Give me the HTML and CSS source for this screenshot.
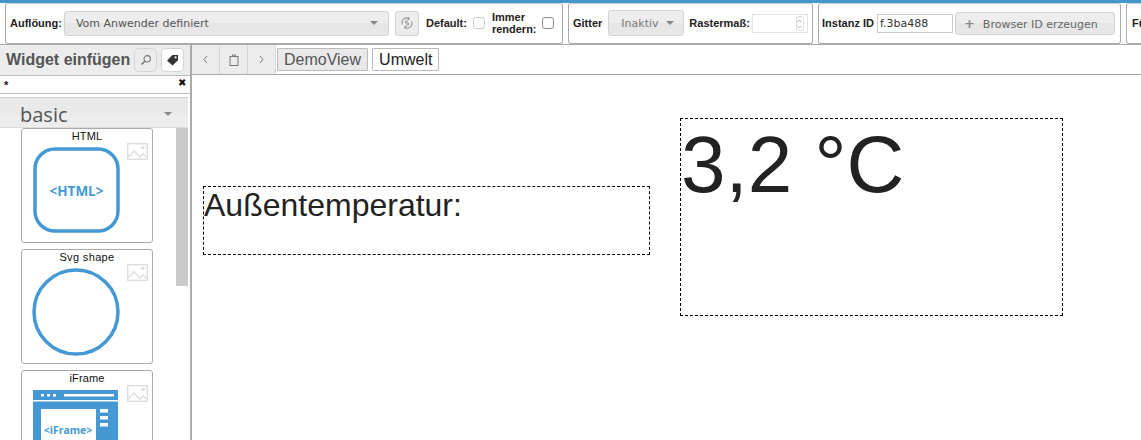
FILE: index.html
```html
<!DOCTYPE html>
<html lang="de">
<head>
<meta charset="utf-8">
<title>Editor</title>
<link rel="stylesheet" href="styles.css">
</head>
<body>
<div class="toolbar">
  <div class="group g1">
    <span class="lbl">Auflöung:</span>
    <div class="select res"><span>Vom Anwender definiert</span><i class="caret"></i></div>
    <button class="iconbtn"><svg width="14" height="14" viewBox="0 0 14 14" fill="none" stroke="#999" stroke-width="1.1"><path d="M2.5 8.5A4.6 4.6 0 0 1 9 2.6M11.5 5.5A4.6 4.6 0 0 1 5 11.4"/><path d="M8 1l1.4 1.8L7.6 4M6 13l-1.4-1.8L6.4 10"/><path d="M7.8 5H6.4a1 1 0 0 0 0 2h1.2a1 1 0 0 1 0 2H6.2"/></svg></button>
    <span class="lbl def">Default:</span><span class="check"></span>
    <span class="lbl two">Immer<br>rendern:</span><span class="check dark"></span>
  </div>
  <div class="group g2">
    <span class="lbl">Gitter</span>
    <div class="select grid"><span>Inaktiv</span><i class="caret"></i></div>
    <span class="lbl">Rastermaß:</span>
    <div class="spin"><span class="spinner"><svg width="7" height="14" viewBox="0 0 7 14" fill="none" stroke="#aaa"><path d="M1.5 5L3.5 3l2 2M1.5 9l2 2 2-2"/></svg></span></div>
  </div>
  <div class="group g3">
    <span class="lbl">Instanz ID</span>
    <div class="idinput">f.3ba488</div>
    <button class="browser"><b>+</b>Browser ID erzeugen</button>
  </div>
  <div class="group g4"><span class="lbl">Fü</span></div>
</div>
<div class="main">
  <aside class="side">
    <div class="sidehead">
      <h2>Widget einfügen</h2>
      <span class="tool"><svg width="12" height="12" viewBox="0 0 12 12" fill="none" stroke="#777" stroke-width="1.1"><circle cx="7.2" cy="4.8" r="3.2"/><path d="M4.8 7.2L1.5 10.5" stroke-width="1.6"/></svg></span>
      <span class="tool on"><svg width="13" height="12" viewBox="0 0 13 12"><path d="M1 6.5L6.5 1H12v5.2L6.5 11.5z" fill="#333"/><circle cx="9.6" cy="3.4" r="1.1" fill="#fff"/></svg></span>
    </div>
    <div class="search"><span class="q">*</span><span class="x">✖</span></div>
    <div class="accordion"><span>basic</span><i class="caret"></i></div>
    <div class="list">
      <div class="cards">
        <div class="card">
          <div class="name">HTML</div>
          <svg class="ph" width="21" height="17" viewBox="0 0 21 17" fill="none" stroke="#ddd" stroke-width="1.4"><rect x=".7" y=".7" width="19.6" height="15.6"/><path d="M1 14l6-6 6 6 3-3 4 3.500"/><circle cx="16" cy="4.500" r="1.100" fill="#ddd"/></svg>
          <div class="thumb"><svg width="88" height="86" viewBox="0 0 88 86"><rect x="2" y="2" width="83" height="82" rx="20" fill="#fff" stroke="#4499d4" stroke-width="3.500"/><text x="43.500" y="49" class="svgt t1" text-anchor="middle">&lt;HTML&gt;</text></svg></div>
        </div>
        <div class="card">
          <div class="name wide">Svg shape</div>
          <svg class="ph" width="21" height="17" viewBox="0 0 21 17" fill="none" stroke="#ddd" stroke-width="1.4"><rect x=".7" y=".7" width="19.6" height="15.6"/><path d="M1 14l6-6 6 6 3-3 4 3.500"/><circle cx="16" cy="4.500" r="1.100" fill="#ddd"/></svg>
          <div class="thumb"><svg width="90" height="90" viewBox="0 0 90 90"><circle cx="44" cy="44" r="42" fill="#fff" stroke="#4499d4" stroke-width="3.500"/></svg></div>
        </div>
        <div class="card">
          <div class="name">iFrame</div>
          <svg class="ph" width="21" height="17" viewBox="0 0 21 17" fill="none" stroke="#ddd" stroke-width="1.4"><rect x=".7" y=".7" width="19.6" height="15.6"/><path d="M1 14l6-6 6 6 3-3 4 3.500"/><circle cx="16" cy="4.500" r="1.100" fill="#ddd"/></svg>
          <div class="thumb"><svg width="86" height="86" viewBox="0 0 86 86"><rect width="85" height="86" fill="#4499d4"/><g fill="#fff"><rect y="10" width="85" height="1.500"/><rect x="8" y="4" width="3" height="2.500"/><rect x="14" y="4" width="3" height="2.500"/><rect x="20" y="4" width="3" height="2.500"/><rect x="31" y="4" width="50" height="2.500"/><rect x="8" y="19" width="55" height="67"/><rect x="67" y="19" width="8" height="3.500"/><rect x="67" y="26" width="8" height="3.500"/><rect x="67" y="33" width="8" height="3.500"/></g><text x="35" y="44" class="svgt t2" text-anchor="middle">&lt;iFrame&gt;</text></svg></div>
        </div>
      </div>
      <div class="scrollbar"></div>
    </div>
  </aside>
  <section class="work">
    <div class="tabs">
      <button class="nav"><svg width="7" height="9" viewBox="0 0 7 9" fill="none" stroke="#777"><path d="M5 1L2 4.500 5 8"/></svg></button>
      <button class="nav"><svg width="10" height="12" viewBox="0 0 10 12" fill="none" stroke="#777"><rect x="1" y="2.500" width="8" height="9"/><path d="M3.500 2.500V1h3v1.500"/></svg></button>
      <button class="nav"><svg width="7" height="9" viewBox="0 0 7 9" fill="none" stroke="#777"><path d="M2 1l3 3.500L2 8"/></svg></button>
      <span class="tab">DemoView</span>
      <span class="tab active">Umwelt</span>
    </div>
    <div class="canvas">
      <div class="widget w1">Außentemperatur:</div>
      <div class="widget w2">3,2 °C</div>
    </div>
  </section>
</div>
</body>
</html>
```
FILE: styles.css
```css
* { box-sizing: border-box; }
html, body { margin: 0; height: 100%; overflow: hidden; }
body {
  width: 1141px; height: 440px; background: #fff;
  font-family: "Liberation Sans", Arial, sans-serif; color: #222;
  border-top: 3px solid #4596cf;
}
.toolbar {
  height: 42px; display: flex; gap: 5px; padding: 0 0 0 5px;
  border-bottom: 1px solid #aaa; overflow: hidden; background: #fff;
}
.group {
  height: 41px; padding-bottom: 1px; border: 1px solid #aaa; border-top-color: #ccc; border-radius: 3px;
  display: flex; align-items: center; flex: none; background: #fff;
}
.g1 { width: 558px; padding-left: 4px; }
.g2 { width: 245px; padding-left: 4px; }
.g3 { width: 303px; padding-left: 3px; }
.g4 { width: 40px; padding-left: 5px; }
.lbl { font-size: 11px; font-weight: bold; color: #222; line-height: 12px; }
.select {
  display: flex; align-items: center; justify-content: space-between;
  border: 1px solid #d3d3d3; border-radius: 3px;
  background: linear-gradient(#ededed 50%, #e5e5e5 50%, #e8e8e8);
  font-family: "DejaVu Sans", sans-serif; font-size: 11px; color: #555;
}
.res { width: 325px; height: 25px; margin-left: 2px; padding: 0 10px 0 11px; }
.grid { width: 76px; height: 26px; margin-left: 6px; padding: 0 9px 0 12px; color: #777; }
.caret { width: 0; height: 0; border: 4px solid transparent; border-top: 4px solid #888; border-bottom: 0; display: block; }
.iconbtn {
  width: 24px; height: 25px; margin-left: 6px; padding: 0; border: 1px solid #d3d3d3; border-radius: 3px;
  background: #ececec; display: flex; align-items: center; justify-content: center;
}
.def { margin-left: 7px; }
.check { width: 12px; height: 12px; border: 1px solid #ccc; border-radius: 3px; margin-left: 6px; background: #fff; }
.check.dark { border-color: #888; margin-left: 5px; }
.two { margin-left: 7px; width: 45px; }
.g2 .grid + .lbl { margin-left: 5px; }
.spin {
  width: 56px; height: 19px; margin-left: 2px; border: 1px solid #e3e3e3;
  display: flex; justify-content: flex-end; align-items: center; padding-right: 3px;
}
.spinner { display: flex; width: 8px; height: 15px; border: 1px solid #ddd; border-radius: 3px; overflow: hidden; }
.spinner svg { margin-left: -1px; }
.idinput {
  width: 76px; height: 19px; margin-left: 3px; border: 1px solid #ccc;
  font-family: "DejaVu Sans", sans-serif; font-size: 11px; line-height: 17px; padding-left: 2px; color: #333;
}
.browser {
  width: 160px; height: 23px; margin-left: 2px; border: 1px solid #d3d3d3; border-radius: 3px;
  background: linear-gradient(#ededed 50%, #e5e5e5 50%, #e8e8e8); padding: 0 0 0 8px; text-align: left;
  font-family: "DejaVu Sans", sans-serif; font-size: 11px; color: #666;
}
.browser b { font-weight: bold; font-size: 13px; color: #888; margin-right: 8px; }
.main { display: flex; height: 395px; }
.side { width: 192px; flex: none; border-right: 2px solid #aaa; display: flex; flex-direction: column; overflow: hidden; }
.sidehead {
  height: 31px; flex: none; display: flex; align-items: center; padding-left: 6px;
  background: #ececec; border-bottom: 1px solid #bbb;
}
.sidehead h2 { margin: 0; font-size: 16px; font-weight: bold; color: #555; line-height: 20px; white-space: nowrap; }
.tool {
  width: 23px; height: 24px; margin-left: 4px; border: 1px solid #d5d5d5; border-radius: 5px;
  display: flex; align-items: center; justify-content: center; background: #ececec;
}
.tool.on { background: #fff; }
.search { height: 18px; flex: none; border-bottom: 1px solid #bbb; display: flex; justify-content: space-between; padding: 2px 4px 0; font-size: 11px; line-height: 14px; color: #111; }
.q { font-weight: bold; }
.x { font-size: 10px; margin-top: -2px; }
.accordion {
  height: 31px; flex: none; margin: 3px 2px 0 0; padding: 3px 16px 0 20px;
  display: flex; align-items: center; justify-content: space-between;
  background: linear-gradient(#e9e9e9 60%, #ededed 60%); border-top: 1px solid #ccc; border-bottom: 1px solid #ddd;
  font-family: "Open Sans", sans-serif; font-size: 20px; color: #555;
}
.list { flex: 1; min-height: 0; display: flex; position: relative; overflow: hidden; }
.cards { width: 176px; padding-left: 21px; display: flex; flex-direction: column; gap: 6px; }
.card {
  width: 132px; height: 115px; flex: none; border: 1px solid #aaa; border-radius: 3px; position: relative; background: #fff;
}
.name { font-size: 11px; line-height: 13px; padding-top: 1px; text-align: center; letter-spacing: 0.1px; color: #111; }
.name.wide { letter-spacing: 0.35px; }
.thumb { position: absolute; left: 11px; top: 18px; }
.card:nth-child(2) .thumb { left: 10px; top: 18px; }
.card:nth-child(3) .thumb { left: 11px; top: 19px; }
.ph { position: absolute; left: 105px; top: 14px; }
.svgt { font-family: "Open Sans", sans-serif; font-weight: bold; fill: #4499d4; }
.t1 { font-size: 13.500px; }
.t2 { font-size: 10.500px; }
.scrollbar { width: 12px; height: 158px; background: #c9c9c9; flex: none; }
.work { flex: 1; min-width: 0; display: flex; flex-direction: column; }
.tabs { height: 30px; flex: none; display: flex; align-items: center; border-bottom: 1px solid #aaa; }
.nav {
  width: 28px; height: 29px; padding: 0; border: 0; border-right: 1px solid #d5d5d5; background: #ececec;
  display: flex; align-items: center; justify-content: center;
}
.tab {
  height: 23px; margin-left: 1px; padding: 0 6px; border: 1px solid #bbb; border-radius: 1px;
  background: #e9e9e9; color: #555; font-size: 16px; line-height: 21px;
}
.tab.active { background: #fff; color: #222; margin-left: 4px; }
.canvas { flex: 1; position: relative; background: #fff; }
.widget { position: absolute; border: 1px dashed #000; color: #222; line-height: 1.15; }
.w1 { left: 11px; top: 111px; width: 447px; height: 69px; font-size: 32px; }
.w2 { left: 488px; top: 43px; width: 383px; height: 198px; font-size: 80px; }
```
